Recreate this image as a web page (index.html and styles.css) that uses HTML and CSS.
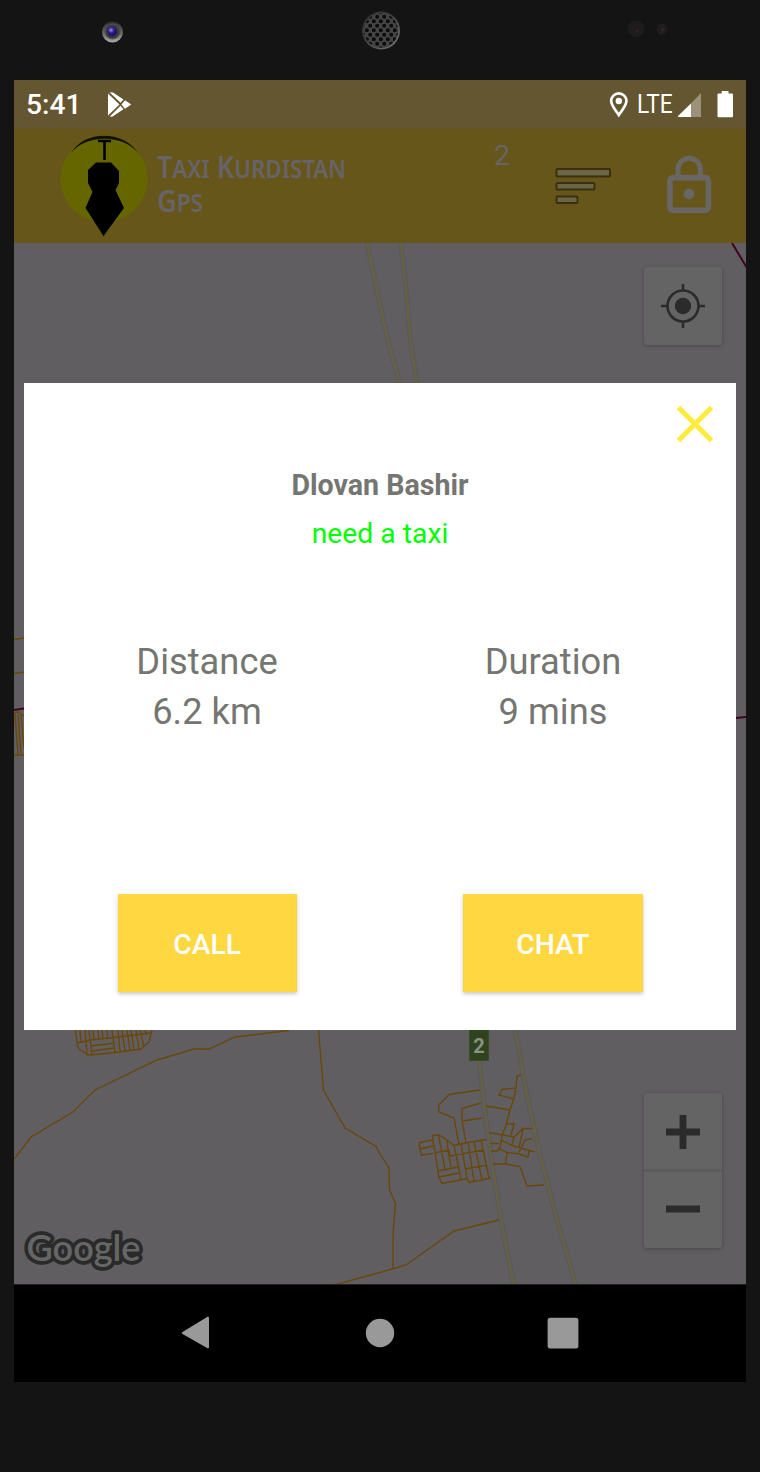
FILE: index.html
```html
<!DOCTYPE html>
<html lang="en">
<head>
<meta charset="utf-8">
<title>Taxi Kurdistan Gps</title>
<link rel="stylesheet" href="styles.css">
</head>
<body>
<div class="phone">
  <svg class="bezel" viewBox="0 0 760 80">
    <defs>
      <linearGradient id="lens" x1="0" y1="0" x2="0" y2="1"><stop offset="0" stop-color="#2e2e30"/><stop offset=".5" stop-color="#606062"/><stop offset="1" stop-color="#aaa"/></linearGradient>
      <radialGradient id="glass" cx=".4" cy=".35" r=".65"><stop offset="0" stop-color="#9a9ad8"/><stop offset=".45" stop-color="#2b1f98"/><stop offset="1" stop-color="#15124a"/></radialGradient>
      <linearGradient id="grille" x1="0" y1="0" x2="1" y2="1"><stop offset="0" stop-color="#242424"/><stop offset=".5" stop-color="#444"/><stop offset="1" stop-color="#808080"/></linearGradient>
      <pattern id="holes" x="379" y="28" width="7" height="9" patternUnits="userSpaceOnUse">
        <circle cx="1.75" cy="2.25" r="2.1" fill="#0c0c0c"/><circle cx="5.25" cy="6.75" r="2.1" fill="#0c0c0c"/>
      </pattern>
    </defs>
    <circle cx="112.500" cy="32" r="10.500" fill="url(#lens)"/>
    <circle cx="112.500" cy="31.500" r="7.500" fill="#3a3a3c" stroke="#555" stroke-width="1"/>
    <circle cx="112" cy="31.500" r="4.800" fill="url(#glass)"/>
    <circle cx="381" cy="30.500" r="19" fill="url(#grille)"/>
    <circle cx="381" cy="30.500" r="17.500" fill="#444"/>
    <circle cx="381" cy="30.500" r="17" fill="url(#holes)"/>
    <circle cx="636" cy="29" r="8.500" fill="#1d1b1b"/><circle cx="637" cy="31" r="1.500" fill="#332422"/>
    <circle cx="662" cy="29" r="5.500" fill="#1f1c1c"/><circle cx="662.500" cy="29.500" r="1.500" fill="#382624"/>
  </svg>

  <div class="screen">
    <div class="status">
      <span class="clock">5:41</span>
      <svg class="play" viewBox="107 91 25 27">
        <path fill="#fff" d="M108 93.500L119.500 104.500L108 115.500ZM109.500 92.200L113 92.600L123.500 99.500L120.500 102.800ZM125 100.200L131.200 104.500L125 108.800L121.400 104.500ZM120.500 105.700L123.500 109.200L112.500 116.500L109.500 116.800Z"/>
      </svg>
      <svg class="indicators" viewBox="608 88 128 34">
        <path fill="none" stroke="#fff" stroke-width="2.700" d="M618.800 115C615.500 110 611.200 105.500 611.200 101A7.600 7.600 0 0 1 626.400 101C626.400 105.500 622.100 110 618.800 115Z"/>
        <circle cx="618.800" cy="101" r="3.200" fill="#fff"/>
        <text class="lte" x="637" y="113" textLength="35.500" lengthAdjust="spacingAndGlyphs">LTE</text>
        <path fill="#9a9178" d="M701 93V117H678Z"/><path fill="#fff" d="M691 103.500V117H678V116Z"/>
        <path fill="#fff" d="M721.700 91H728.500V93.500H732Q733 93.500 733 94.500V116.200Q733 117.200 732 117.200H718.500Q717.500 117.200 717.500 116.200V94.500Q717.500 93.500 718.500 93.500H721.700Z"/>
      </svg>
    </div>

    <div class="appbar">
      <svg class="logo" viewBox="60 133 90 106">
        <circle cx="104" cy="179" r="43.500" fill="#666600"/>
        <path d="M71 153C84 130 124 130 138 153C123 134 86 134 71 153Z" fill="#111100"/>
        <path d="M94 219L103.500 238L114 219Z" fill="#515500"/>
        <path d="M98 141H111M104.500 141V160" stroke="#000" stroke-width="2.600" fill="none"/>
        <path d="M96 162.500H111L119 171V183L115.500 190L124 208L103.500 236L85.500 208L92.500 192L88 183V170Z" fill="#000"/>
      </svg>
      <svg class="title" viewBox="155 133 200 90">
        <text x="157" y="178" textLength="189" lengthAdjust="spacingAndGlyphs">T<tspan class="sc">axi</tspan> K<tspan class="sc">urdistan</tspan></text>
        <text x="157" y="211.500" textLength="46" lengthAdjust="spacingAndGlyphs">G<tspan class="sc">ps</tspan></text>
      </svg>
      <span class="count">2</span>
      <svg class="filter" viewBox="554 166 60 40">
        <g fill="#6a6547" stroke="#3a300f" stroke-width="2"><rect x="556.500" y="169" width="53.500" height="7.500" rx="1"/><rect x="556.500" y="183" width="38" height="6.500" rx="1"/><rect x="556.500" y="196.500" width="21" height="6.500" rx="1"/></g>
      </svg>
      <svg class="lock" viewBox="664 153 50 64">
        <rect x="669.900" y="177.600" width="38.500" height="32.600" rx="3" fill="none" stroke="#686766" stroke-width="5.600"/>
        <path d="M677.900 176V169.500A11.200 11.200 0 0 1 700.300 169.500V176" fill="none" stroke="#686766" stroke-width="5"/>
        <circle cx="689" cy="194" r="5.400" fill="#686766"/>
      </svg>
    </div>

    <div class="map">
      <svg class="roads" viewBox="14 243 732 1041">
        <g class="highway-edge">
          <path d="M367 243L380 305L389 345L400 384M401 243L406 290L411 345L417 384"/>
          <path d="M479 1060L486 1120L493 1169L501 1220L514 1286M515 1029L527 1095L540 1155L557 1220L576 1286"/>
        </g>
        <g class="highway">
          <path d="M367 243L380 305L389 345L400 384M401 243L406 290L411 345L417 384"/>
          <path d="M479 1060L486 1120L493 1169L501 1220L514 1286M515 1029L527 1095L540 1155L557 1220L576 1286"/>
        </g>
        <path class="border" d="M732 243L747 268M14 710L24 708.500M736 718L746 717"/>
        <g class="street">
          <path d="M14 639.500L24 638M14 673.500L24 672M14 755H24M14 713L18 712L24 716M15 714L18 754M18 714L21 754M21 715L24 748"/>
          <path d="M14 1159L31 1137L73 1112L95 1090L157 1060L194 1049H209L235 1037L289 1030.500"/>
          <path d="M318.500 1030L323.500 1090L345 1128L376 1146.500L380 1154L389 1168L389.500 1190L395.500 1203L393 1235V1269"/>
          <path d="M334 1285L380 1272.500L406 1265L454 1231L499 1220"/>
          <path d="M75.500 1030L77 1043L79 1049L88 1055L112 1053L141 1049L149 1042L152 1030M77 1043L91 1040L118 1037L151 1033"/>
          <path d="M80 1030L81 1042M85 1030L87 1053M89 1030L92 1055M93 1030L94 1040M98 1030L99 1040M102 1030L103 1039M107 1030L108 1038M112 1030L115 1053M118 1030L120 1052M122 1030L125 1051M127 1030L130 1050M131 1030L134 1050M136 1030L139 1049M140 1030L144 1047M145 1030L146 1034M91 1046L115 1043M91 1051L115 1048"/>
          <path d="M480 1090L449 1094.500L438.500 1105L439 1112L454 1118L459 1144.500M481 1103L462 1108.500V1121L466 1143M463 1121L482 1118"/>
          <path d="M419.500 1142.500L433 1140L432.500 1135.500L439 1135L447 1140L454 1145.500L466 1143L486 1139.500M419.500 1142.500V1148L421.500 1155.500L449 1150L450 1156.500M420 1149L433 1146M433 1140L436 1159L439 1177L442 1183.500L467 1178.500L469 1182.500L491 1178M438.500 1135L445 1169M447 1140L448 1150L451 1167M454 1145L461 1179M461 1144L467 1178M468 1142L474 1181M474 1141L482 1180M481 1140L489 1178M450 1156L484 1150M438 1171L458 1167M439 1177L459 1173M465 1169L487 1165"/>
          <path d="M521 1075L517 1076L516 1088L514 1098L510 1110L506 1125L502 1136L500 1148L497.500 1151H491M515 1088L502 1089.500L499 1095L513 1099M486 1106L510 1110M489 1132.500L514 1137L523 1128.500H532M506 1124L514 1123.500L511 1135M501 1140L511 1145L520 1148L535 1152M490 1143.500H499M514 1137L512 1145M523 1128.500L519 1148M532 1138.500L525 1140L519 1152.500M498 1148L507 1152.500L519 1154L528 1157L529 1151M507 1152.500L505.500 1164M493 1164H506L520 1166.500L527 1186L544 1185"/>
        </g>
        <rect x="469.500" y="1029" width="19" height="31.500" fill="#2f441d" stroke="#3b4b30" stroke-width="1"/>
        <text class="shield" x="479" y="1053" text-anchor="middle">2</text>
        <text class="google" x="26.500" y="1261" textLength="114" lengthAdjust="spacingAndGlyphs">Google</text>
      </svg>
      <div class="controls">
        <div class="ctl">
          <svg viewBox="0 0 44 44"><g fill="none" stroke="#2b2b2b" stroke-width="2.600"><circle cx="22" cy="22" r="15.500"/><path d="M22 0V7M22 37V44M0 22H7M37 22H44"/></g><circle cx="22" cy="22" r="8.200" fill="#2b2b2b"/></svg>
        </div>
        <div class="zoom">
          <div class="zoom-btn"><svg viewBox="0 0 44 44"><path d="M5 22H39M22 5V39" stroke="#2b2b2b" stroke-width="6.800"/></svg></div>
          <div class="zoom-btn"><svg viewBox="0 0 44 44"><path d="M5 22H39" stroke="#2b2b2b" stroke-width="6.800"/></svg></div>
        </div>
      </div>
    </div>

    <div class="navbar">
      <svg viewBox="0 0 34 34"><path d="M2.500 16L27.500 .8Q29 .3 29 2V31Q29 32.700 27.500 32.200L2.500 18Q.8 17 2.500 16Z" fill="#999"/></svg>
      <svg viewBox="0 0 34 34"><circle cx="17" cy="17" r="14.200" fill="#999"/></svg>
      <svg viewBox="0 0 34 34"><rect x="1.600" y="1.800" width="30.800" height="30.600" rx="2.500" fill="#999"/></svg>
    </div>

    <div class="dialog">
      <svg class="close" viewBox="0 0 36 36"><path d="M1.500 1.500L34.500 34.500M34.500 1.500L1.500 34.500" stroke="#ffeb3b" stroke-width="4.900"/></svg>
      <div class="name">Dlovan Bashir</div>
      <div class="need">need a taxi</div>
      <div class="stats">
        <div class="stat"><div>Distance</div><div>6.2 km</div></div>
        <div class="stat"><div>Duration</div><div>9 mins</div></div>
      </div>
      <div class="actions">
        <button class="btn">CALL</button>
        <button class="btn">CHAT</button>
      </div>
    </div>
  </div>
</div>
</body>
</html>
```

FILE: styles.css
```css
* { box-sizing: border-box; }
body { margin: 0; background: #141414; font-family: Roboto, "Liberation Sans", sans-serif; }
svg { display: block; flex: none; }
.phone { width: 760px; height: 1472px; background: #141414; overflow: hidden; }
.bezel { width: 760px; height: 80px; }
.screen { position: relative; display: flex; flex-direction: column; width: 732px; height: 1302px; margin: 0 14px; }

.status { display: flex; align-items: center; height: 49px; padding: 0 10px 0 12px; background: #635630; color: #fff; }
.clock { width: 81px; font-size: 28.200px; font-weight: 500; line-height: 50px; }
.play { width: 25px; height: 27px; }
.indicators { width: 128px; height: 34px; margin-left: auto; }
.lte { font: 25px Roboto, sans-serif; fill: #fff; }

.appbar { display: flex; align-items: flex-start; height: 114px; padding: 4px 32px 0 46px; background: #66561a; }
.logo { width: 90px; height: 106px; }
.title { width: 200px; height: 90px; margin-left: 5px; }
.title text { font: 600 30px "Noto Sans", sans-serif; fill: #666469; }
.title .sc { font-size: 24.800px; text-transform: uppercase; }
.count { width: 16px; margin: 6px 0 0 139px; font-size: 28.300px; line-height: 34px; color: #666469; }
.filter { width: 60px; height: 40px; margin: 33px 0 0 44px; }
.lock { width: 50px; height: 64px; margin: 20px 0 0 50px; }

.map { display: grid; height: 1041px; background: #605e61; }
.roads, .controls { grid-area: 1 / 1; }
.roads { width: 732px; height: 1041px; }
.roads path { fill: none; }
.highway-edge { stroke: #575a61; stroke-width: 5.200; }
.highway { stroke: #666145; stroke-width: 3; }
.border { stroke: #430022; stroke-width: 2; }
.street { stroke: #6b4706; stroke-width: 1.350; }
.shield { font: bold 20px Roboto, sans-serif; fill: #8b9285; }
.google { font: 600 37px Lato, sans-serif; fill: #666; stroke: #2a2a2a; stroke-width: 7.500px; stroke-linejoin: round; paint-order: stroke; }
.controls { display: flex; flex-direction: column; justify-content: space-between; align-items: flex-end; padding: 24px 24px 36px 0; z-index: 1; }
.controls svg { width: 44px; height: 44px; }
.ctl, .zoom { width: 78px; border-radius: 3px; background: #646464; box-shadow: 0 1px 4px rgba(0, 0, 0, .25); }
.ctl { display: grid; place-items: center; height: 78px; }
.zoom { display: grid; grid-template-rows: 76px 79px; height: 155px; }
.zoom-btn { display: grid; place-items: center; padding-top: 2px; }
.zoom-btn + .zoom-btn { border-top: 3px solid #5b5b5b; padding: 0 0 2px; }

.navbar { display: flex; justify-content: space-between; align-items: center; height: 98px; padding: 0 166px 2px; border-top: 1px solid #222; background: #000; }
.navbar svg { width: 34px; height: 34px; }

.dialog { position: absolute; left: 10px; top: 303px; width: 712px; height: 647px; display: flex; flex-direction: column; background: #fff; color: #757571; text-align: center; }
.close { width: 36px; height: 36px; margin: 23px 23px 0 auto; }
.name { margin-top: 26px; font-size: 28.600px; font-weight: 700; line-height: 34px; }
.need { margin-top: 15px; font-size: 28.300px; line-height: 34px; color: #00ff00; }
.stats { display: flex; justify-content: space-between; padding: 0 83px 0 83px; margin-top: 86px; font-size: 36.300px; line-height: 49.500px; }
.stat { width: 200px; }
.actions { display: flex; justify-content: space-between; margin-top: 158px; padding: 0 93.500px; }
.btn { width: 179.500px; height: 98px; padding: 2px 0 0; border: 0; background: #ffd740; box-shadow: 0 2px 4px rgba(0, 0, 0, .22); color: #fff; font: 500 28.300px Roboto, sans-serif; }
```
